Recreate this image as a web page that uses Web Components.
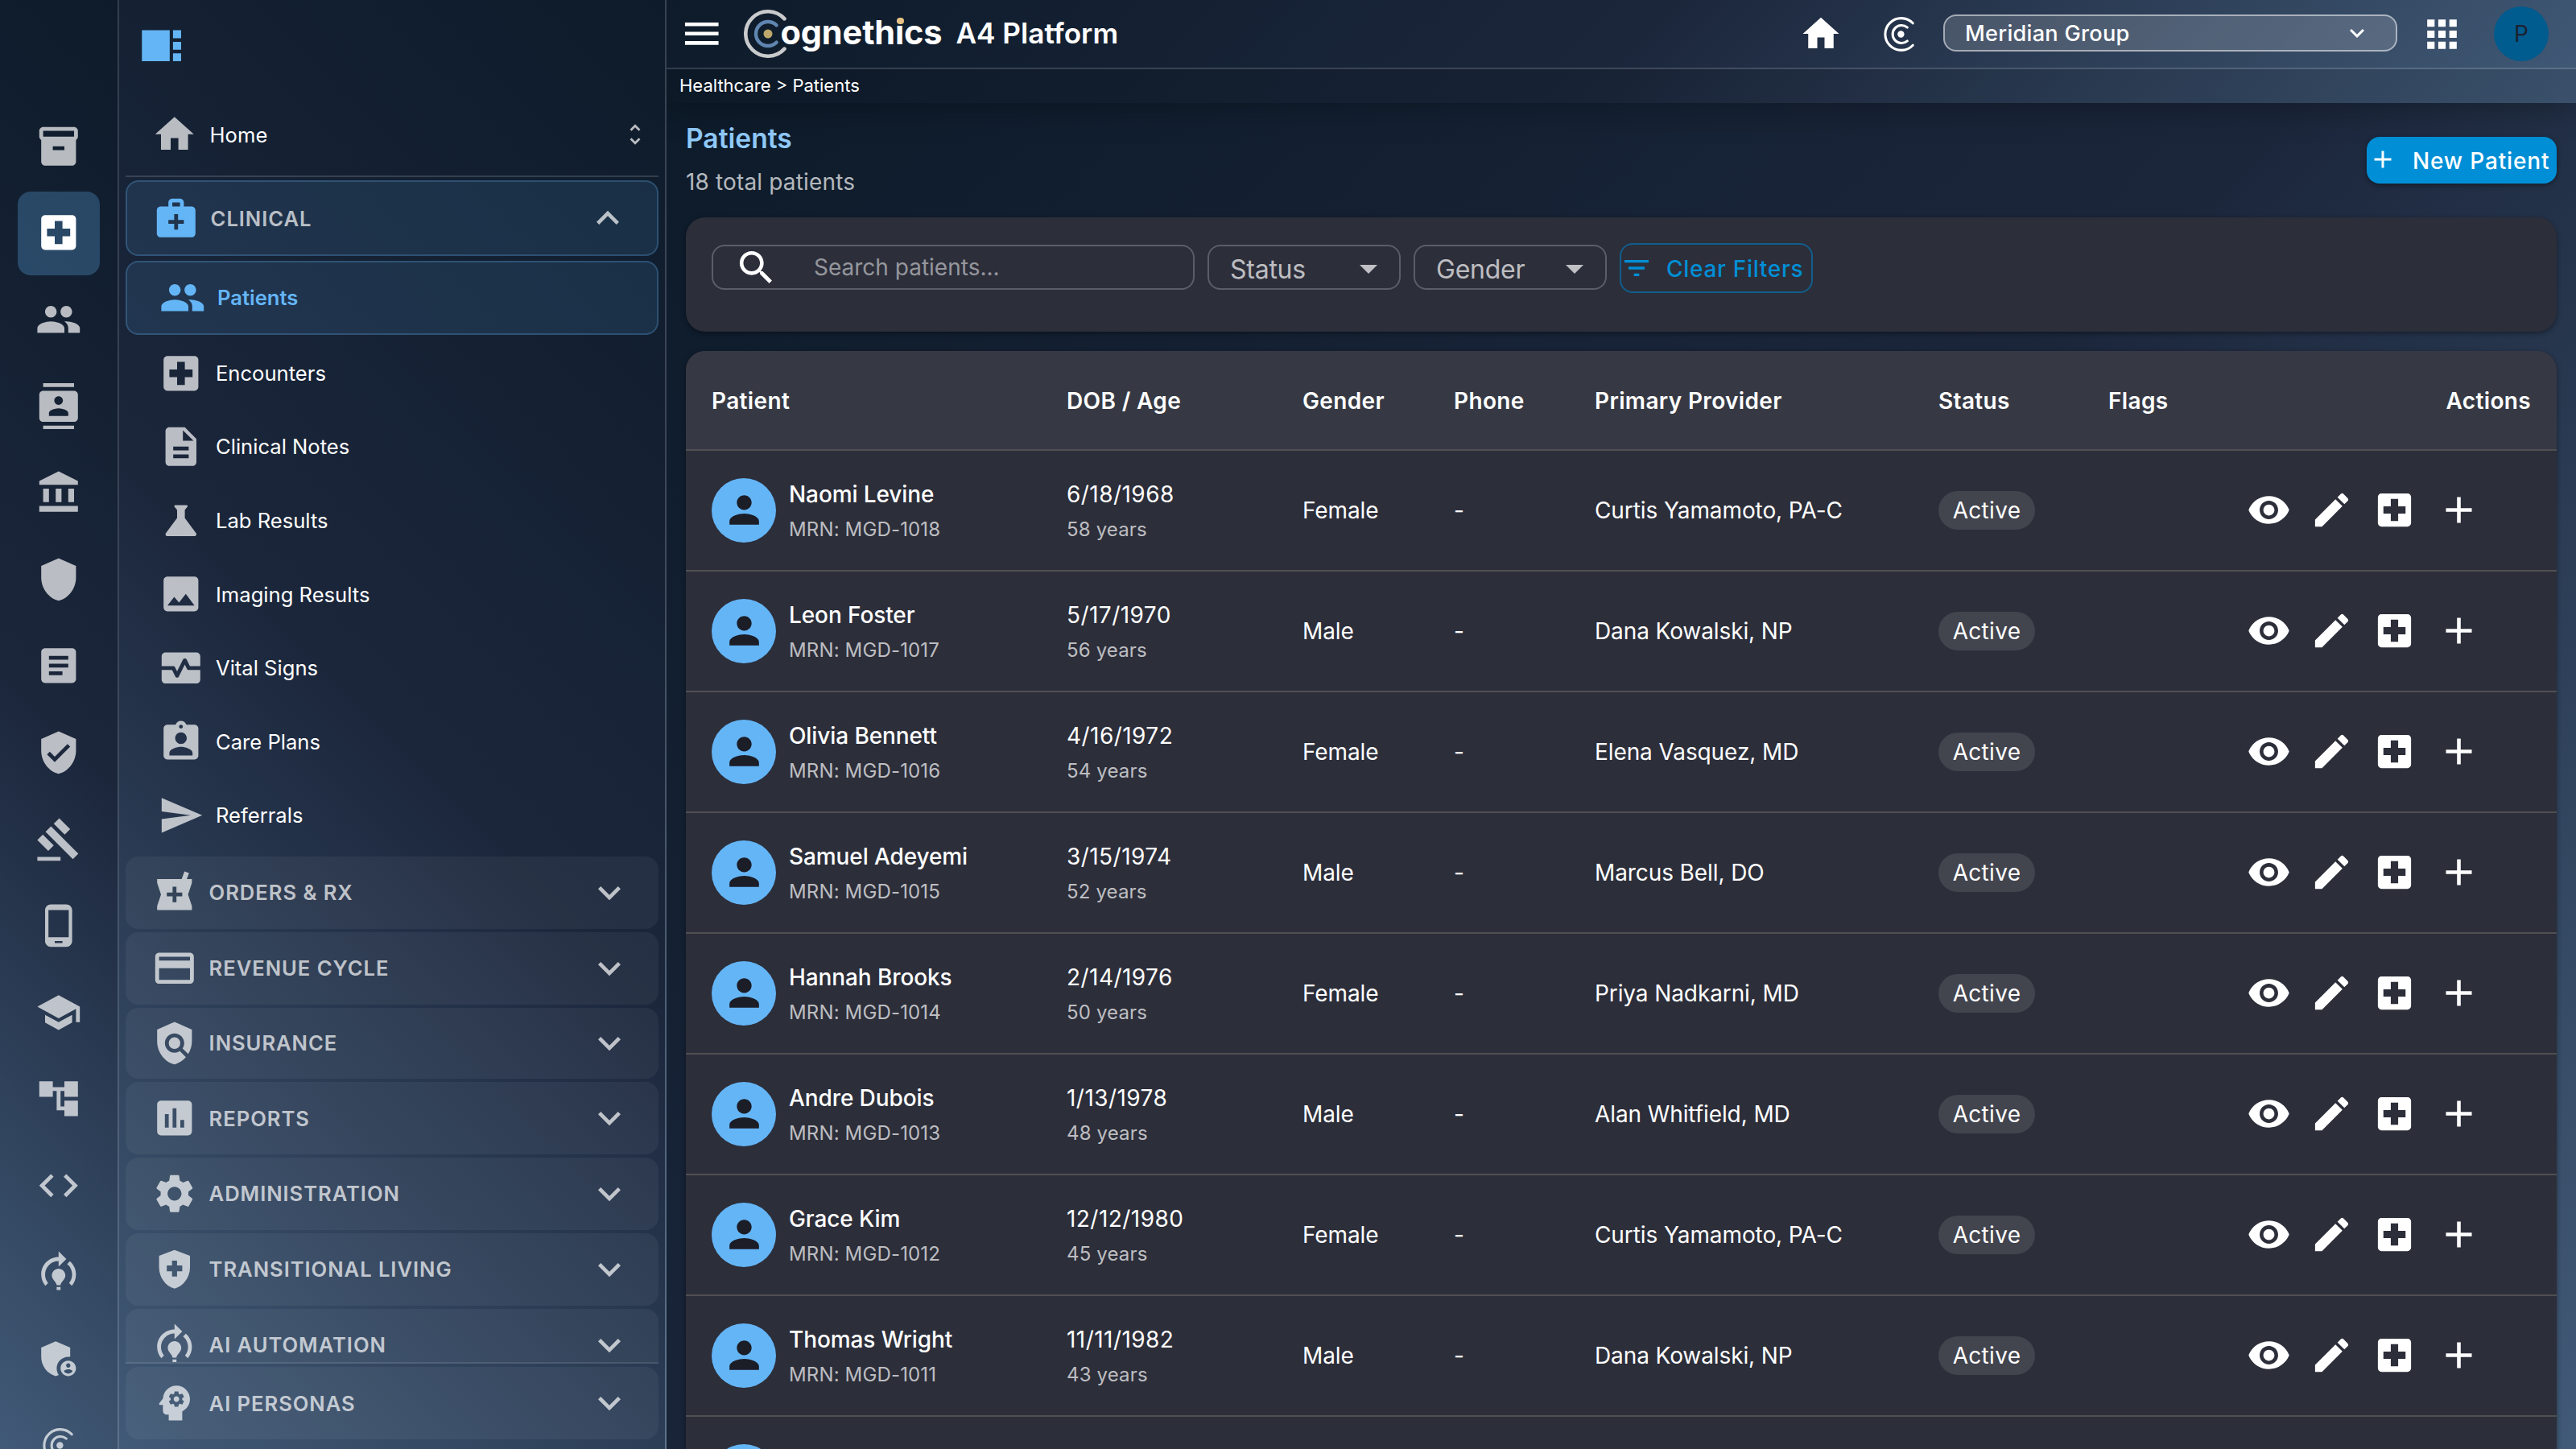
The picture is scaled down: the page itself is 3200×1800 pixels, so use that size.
<!DOCTYPE html>
<html lang="en">
<head>
<meta charset="utf-8">
<title>Patients - A4 Platform</title>
<style>
    html, body {
        margin: 0;
        height: 100%;
    }

    body {
        font-family: Inter, "Noto Sans", sans-serif;
        font-size: 28px;
        color: #fff;
        background: #0d1b2a;
        overflow: hidden;
        --accent: #64b5f6;
        --primary: #008fd6;
        --muted: rgba(255, 255, 255, 0.7);
        --line: rgba(255, 255, 255, 0.15);
        --surface: #2c2e3a;
    }
</style>
</head>
<body>
<a4-app></a4-app>

<script>
const CROSS = 'M19 3H5c-1.1 0-1.99.9-1.99 2L3 19c0 1.1.9 2 2 2h14c1.1 0 2-.9 2-2V5c0-1.1-.9-2-2-2zm-1 11h-4v4h-4v-4H6v-4h4V6h4v4h4v4z';

// 24x24 icon paths
const ICONS = {
    archive: 'M20 2H4c-1 0-2 .9-2 2v3.01c0 .72.43 1.34 1 1.69V20c0 1.1 1.1 2 2 2h14c.9 0 2-.9 2-2V8.7c.57-.35 1-.97 1-1.69V4c0-1.1-1-2-2-2zm-5 12H9v-2h6v2zm5-7H4V4h16v3z',
    hospital: CROSS,
    people: 'M16 11c1.66 0 2.99-1.34 2.99-3S17.66 5 16 5c-1.66 0-3 1.34-3 3s1.34 3 3 3zm-8 0c1.66 0 2.99-1.34 2.99-3S9.66 5 8 5C6.34 5 5 6.34 5 8s1.34 3 3 3zm0 2c-2.33 0-7 1.17-7 3.5V19h14v-2.5c0-2.33-4.67-3.5-7-3.5zm8 0c-.29 0-.62.02-.97.05 1.16.84 1.97 1.97 1.97 3.45V19h6v-2.5c0-2.33-4.67-3.5-7-3.5z',
    contacts: 'M20 0H4v2h16V0zM4 24h16v-2H4v2zM20 4H4c-1.1 0-2 .9-2 2v12c0 1.1.9 2 2 2h16c1.1 0 2-.9 2-2V6c0-1.1-.9-2-2-2zm-8 2.75c1.24 0 2.25 1.01 2.25 2.25s-1.01 2.25-2.25 2.25S9.75 10.24 9.75 9 10.76 6.75 12 6.75zM17 17H7v-1.5c0-1.67 3.33-2.5 5-2.5s5 .83 5 2.5V17z',
    bank: 'M4 10v7h3v-7H4zm6.5 0v7h3v-7h-3zM2 22h20v-3H2v3zm15-12v7h3v-7h-3zm-5-9L2 6v2h20V6L12 1z',
    shield: 'M12 1L3 5v6c0 5.55 3.84 10.74 9 12 5.16-1.26 9-6.45 9-12V5l-9-4z',
    article: 'M19 3H5c-1.1 0-2 .9-2 2v14c0 1.1.9 2 2 2h14c1.1 0 2-.9 2-2V5c0-1.1-.9-2-2-2zm-5 14H7v-2h7v2zm3-4H7v-2h10v2zm0-4H7V7h10v2z',
    verified: 'M12 1L3 5v6c0 5.55 3.84 10.74 9 12 5.16-1.26 9-6.45 9-12V5l-9-4zm-2 16l-4-4 1.41-1.41L10 14.17l6.59-6.59L18 9l-8 8z',
    gavel: 'M1 21h12v2H1zM5.245 8.07l2.83-2.827 14.14 14.142-2.828 2.828zM12.317 1l5.657 5.656-2.83 2.83-5.654-5.66zM3.825 9.485l5.657 5.657-2.828 2.828-5.657-5.657z',
    phone: 'M16 1H8C6.34 1 5 2.34 5 4v16c0 1.66 1.34 3 3 3h8c1.66 0 3-1.34 3-3V4c0-1.66-1.34-3-3-3zm-2 20h-4v-1h4v1zm3.25-3H6.75V4h10.5v14z',
    school: 'M5 13.18v4L12 21l7-3.82v-4L12 17l-7-3.82zM12 3L1 9l11 6 9-4.91V17h2V9L12 3z',
    tree: 'M22 11V3h-7v3H9V3H2v8h7V8h2v10h4v3h7v-8h-7v3h-2V8h2v3z',
    code: 'M9.4 16.6L4.8 12l4.6-4.6L8 6l-6 6 6 6 1.4-1.4zm5.2 0l4.6-4.6-4.6-4.6L16 6l6 6-6 6-1.4-1.4z',
    training: 'M15.5 13.5c0 2-2.5 3.5-2.5 5h-2c0-1.5-2.5-3-2.5-5 0-1.93 1.57-3.5 3.5-3.5s3.5 1.57 3.5 3.5zm-2.5 6h-2V21h2v-1.5zm6-6.5c0 1.68-.59 3.21-1.58 4.42l1.42 1.42C20.18 17.27 21 15.23 21 13c0-2.74-1.23-5.19-3.16-6.84l-1.42 1.42C17.99 8.86 19 10.82 19 13zm-3-8l-4-4v3c-4.97 0-9 4.03-9 9 0 2.23.82 4.27 2.16 5.84l1.42-1.42C5.59 16.21 5 14.68 5 13c0-3.86 3.14-7 7-7v3l4-4z',
    admin: 'M17 11c.34 0 .67.04 1 .09V6.27L10.5 3 3 6.27v4.91c0 4.54 3.2 8.79 7.5 9.82.55-.13 1.08-.32 1.6-.55-.69-.98-1.1-2.17-1.1-3.45 0-3.31 2.69-6 6-6zM17 13c-2.21 0-4 1.79-4 4s1.79 4 4 4 4-1.79 4-4-1.79-4-4-4zm0 1.38c.62 0 1.12.51 1.12 1.12s-.51 1.12-1.12 1.12-1.12-.51-1.12-1.12.5-1.12 1.12-1.12zm0 5.37c-.93 0-1.74-.46-2.24-1.17.05-.72 1.51-1.08 2.24-1.08s2.19.36 2.24 1.08c-.5.71-1.31 1.17-2.24 1.17z',
    home: 'M10 20v-6h4v6h5v-8h3L12 3 2 12h3v8z',
    unfold: 'M12 5.83L15.17 9l1.41-1.41L12 3 7.41 7.59 8.83 9 12 5.83zm0 12.34L8.83 15l-1.41 1.41L12 21l4.59-4.59L15.17 15 12 18.17z',
    medical: 'M20 6h-4V4c0-1.1-.9-2-2-2h-4c-1.1 0-2 .9-2 2v2H4c-1.1 0-2 .9-2 2v12c0 1.1.9 2 2 2h16c1.1 0 2-.9 2-2V8c0-1.1-.9-2-2-2zM10 4h4v2h-4V4zm6 11h-3v3h-2v-3H8v-2h3v-3h2v3h3v2z',
    description: 'M14 2H6c-1.1 0-1.99.9-1.99 2L4 20c0 1.1.89 2 1.99 2H18c1.1 0 2-.9 2-2V8l-6-6zm2 16H8v-2h8v2zm0-4H8v-2h8v2zm-3-5V3.5L18.5 9H13z',
    science: 'M19.8 18.4L14 10.67V6.5l1.35-1.69c.26-.33.03-.81-.39-.81H9.04c-.42 0-.65.48-.39.81L10 6.5v4.17L4.2 18.4c-.49.66-.02 1.6.8 1.6h14c.82 0 1.29-.94.8-1.6z',
    image: 'M21 19V5c0-1.1-.9-2-2-2H5c-1.1 0-2 .9-2 2v14c0 1.1.9 2 2 2h14c1.1 0 2-.9 2-2zM8.5 13.5l2.5 3.01L14.5 12l4.5 6H5l3.5-4.5z',
    heart: 'M15.11 12.45L14 10.24l-3.11 6.21c-.16.34-.51.55-.89.55s-.73-.21-.89-.55L7.38 13H2v5c0 1.1.9 2 2 2h16c1.1 0 2-.9 2-2v-5h-6c-.38 0-.73-.21-.89-.55zM20 4H4c-1.1 0-2 .9-2 2v5h6c.38 0 .73.21.89.55L10 13.76l3.11-6.21c.34-.68 1.45-.68 1.79 0L16.62 11H22V6c0-1.1-.9-2-2-2z',
    assignment: 'M19 3h-4.18C14.4 1.84 13.3 1 12 1c-1.3 0-2.4.84-2.82 2H5c-1.1 0-2 .9-2 2v14c0 1.1.9 2 2 2h14c1.1 0 2-.9 2-2V5c0-1.1-.9-2-2-2zm-7 0c.55 0 1 .45 1 1s-.45 1-1 1-1-.45-1-1 .45-1 1-1zm0 4c1.66 0 3 1.34 3 3s-1.34 3-3 3-3-1.34-3-3 1.34-3 3-3zm6 12H6v-1.4c0-2 4-3.1 6-3.1s6 1.1 6 3.1V19z',
    send: 'M2.01 21L23 12 2.01 3 2 10l15 2-15 2z',
    pharmacy: 'M21 5h-2.64l1.14-3.14L17.15 1l-1.46 4H3v2l2 6-2 6v2h18v-2l-2-6 2-6V5zm-5 9h-3v3h-2v-3H8v-2h3V9h2v3h3v2z',
    card: 'M20 4H4c-1.11 0-1.99.89-1.99 2L2 18c0 1.11.89 2 2 2h16c1.11 0 2-.89 2-2V6c0-1.11-.89-2-2-2zm0 14H4v-6h16v6zm0-10H4V6h16v2z',
    policy: 'M21 5l-9-4-9 4v6c0 5.55 3.84 10.74 9 12 2.3-.56 4.33-1.9 5.88-3.71l-3.12-3.12c-1.94 1.29-4.58 1.07-6.29-.64-1.95-1.95-1.95-5.12 0-7.07 1.95-1.95 5.12-1.95 7.07 0 1.71 1.71 1.92 4.35.64 6.29l2.9 2.9C20.29 15.69 21 13.38 21 11V5zM9 12a3 3 0 1 0 6 0a3 3 0 1 0-6 0z',
    chart: 'M19 3H5c-1.1 0-2 .9-2 2v14c0 1.1.9 2 2 2h14c1.1 0 2-.9 2-2V5c0-1.1-.9-2-2-2zM9 17H7v-7h2v7zm4 0h-2V7h2v10zm4 0h-2v-4h2v4z',
    settings: 'M19.14 12.94c.04-.3.06-.61.06-.94 0-.32-.02-.64-.07-.94l2.03-1.58c.18-.14.23-.41.12-.61l-1.92-3.32c-.12-.22-.37-.29-.59-.22l-2.39.96c-.5-.38-1.03-.7-1.62-.94l-.36-2.54c-.04-.24-.24-.41-.48-.41h-3.84c-.24 0-.43.17-.47.41l-.36 2.54c-.59.24-1.13.57-1.62.94l-2.39-.96c-.22-.08-.47 0-.59.22L2.74 8.87c-.12.21-.08.47.12.61l2.03 1.58c-.05.3-.09.63-.09.94s.02.64.07.94l-2.03 1.58c-.18.14-.23.41-.12.61l1.92 3.32c.12.22.37.29.59.22l2.39-.96c.5.38 1.03.7 1.62.94l.36 2.54c.05.24.24.41.48.41h3.84c.24 0 .44-.17.47-.41l.36-2.54c.59-.24 1.13-.56 1.62-.94l2.39.96c.22.08.47 0 .59-.22l1.92-3.32c.12-.22.07-.47-.12-.61l-2.01-1.58zM12 15.6c-1.98 0-3.6-1.62-3.6-3.6s1.62-3.6 3.6-3.6 3.6 1.62 3.6 3.6-1.62 3.6-3.6 3.6z',
    safety: 'M12 2L4 5v6.09c0 5.05 3.41 9.76 8 10.91 4.59-1.15 8-5.86 8-10.91V5l-8-3zM16 13h-2.7v2.7h-2.6V13H8v-3h2.7V7.5h2.6V10H16v3z',
    psychology: 'M13 8.57c-.79 0-1.43.64-1.43 1.43s.64 1.43 1.43 1.43 1.43-.64 1.43-1.43-.64-1.43-1.43-1.43zM13 3C9.25 3 6.2 5.94 6.02 9.64L4.1 12.2c-.25.33-.01.8.4.8H6v3c0 1.1.9 2 2 2h1v3h7v-4.68c2.36-1.12 4-3.53 4-6.32 0-3.87-3.13-7-7-7zm3 7c0 .13-.01.26-.02.39l.83.66c.08.06.1.16.05.25l-.8 1.39c-.05.09-.16.12-.24.09l-.99-.4c-.21.16-.43.29-.67.39L14 13.83c-.01.1-.1.17-.2.17h-1.6c-.1 0-.18-.07-.2-.17l-.15-1.06c-.25-.1-.47-.23-.68-.39l-.99.4c-.09.03-.2 0-.25-.09l-.8-1.39c-.05-.08-.03-.19.05-.25l.84-.66c-.01-.13-.02-.26-.02-.39s.02-.27.04-.39l-.85-.66c-.08-.06-.1-.16-.05-.26l.8-1.38c.05-.09.15-.12.24-.09l1 .4c.2-.15.43-.29.67-.39L12 6.17c.02-.1.1-.17.2-.17h1.6c.1 0 .18.07.2.17l.15 1.06c.24.1.46.23.67.39l1-.4c.09-.03.2 0 .24.09l.8 1.38c.05.09.03.2-.05.26l-.85.66c.03.12.04.25.04.39z',
    down: 'M7.41 8.59L12 13.17l4.59-4.58L18 10l-6 6-6-6 1.41-1.41z',
    up: 'M12 8l-6 6 1.41 1.41L12 10.83l4.59 4.58L18 14z',
    menu: 'M3 18h18v-2H3v2zm0-5h18v-2H3v2zm0-7v2h18V6H3z',
    apps: 'M4 8h4V4H4v4zm6 12h4v-4h-4v4zm-6 0h4v-4H4v4zm0-6h4v-4H4v4zm6 0h4v-4h-4v4zm6-10v4h4V4h-4zm-6 4h4V4h-4v4zm6 6h4v-4h-4v4zm0 6h4v-4h-4v4z',
    add: 'M19 13h-6v6h-2v-6H5v-2h6V5h2v6h6v2z',
    search: 'M15.5 14h-.79l-.28-.27C15.41 12.59 16 11.11 16 9.5 16 5.91 13.09 3 9.5 3S3 5.91 3 9.5 5.91 16 9.5 16c1.61 0 3.09-.59 4.23-1.57l.27.28v.79l5 4.99L20.49 19l-4.99-5zm-6 0C7.01 14 5 11.99 5 9.5S7.01 5 9.5 5 14 7.01 14 9.5 11.99 14 9.5 14z',
    filter: 'M10 18h4v-2h-4v2zM3 6v2h18V6H3zm3 7h12v-2H6v2z',
    person: 'M12 12c2.21 0 4-1.79 4-4s-1.79-4-4-4-4 1.79-4 4 1.79 4 4 4zm0 2c-2.67 0-8 1.34-8 4v2h16v-2c0-2.66-5.33-4-8-4z',
    eye: 'M12 4.5C7 4.5 2.73 7.61 1 12c1.73 4.39 6 7.5 11 7.5s9.27-3.11 11-7.5c-1.73-4.39-6-7.5-11-7.5zM12 17c-2.76 0-5-2.24-5-5s2.24-5 5-5 5 2.24 5 5-2.24 5-5 5zm0-8c-1.66 0-3 1.34-3 3s1.34 3 3 3 3-1.34 3-3-1.34-3-3-3z',
    edit: 'M3 17.25V21h3.75L17.81 9.94l-3.75-3.75L3 17.25zM20.71 7.04c.39-.39.39-1.02 0-1.41l-2.34-2.34c-.39-.39-1.02-.39-1.41 0l-1.83 1.83 3.75 3.75 1.83-1.83z',
    panel: 'M2.2 4h14.4v16H2.2zM18.3 4h4.2v4.1h-4.2zM18.3 10h4.2v4.1h-4.2zM18.3 15.9h4.2V20h-4.2z'
};

const CMARK = `
    <g fill="none" stroke="currentColor" stroke-linecap="round" stroke-width="1.4">
        <path d="M19.1 5.8A9 9 0 1 0 19.1 18.2"/>
        <path d="M16 8.2A5 5 0 1 0 16 15.8"/>
    </g>
    <circle cx="12.4" cy="12" r="1.9" fill="currentColor"/>`;

class A4Icon extends HTMLElement {
    constructor() {
        super();
        this.attachShadow({ mode: 'open' });
    }

    static get observedAttributes() {
        return ['name', 'size'];
    }

    attributeChangedCallback() {
        this.render();
    }

    render() {
        const name = this.getAttribute('name');
        const size = this.getAttribute('size') || 57.6;
        const shape = name === 'cmark' ? CMARK : `<path fill="currentColor" fill-rule="evenodd" d="${ICONS[name]}"/>`;
        this.shadowRoot.innerHTML = `
            <style>
                :host { display: block; flex: none; width: ${size}px; height: ${size}px; }
                svg { display: block; width: 100%; height: 100%; }
            </style>
            <svg viewBox="0 0 24 24">${shape}</svg>
        `;
    }
}
customElements.define('a4-icon', A4Icon);

// Narrow column of module icons
class IconRail extends HTMLElement {
    constructor() {
        super();
        this.attachShadow({ mode: 'open' });
        const names = ['archive', 'hospital', 'people', 'contacts', 'bank', 'shield', 'article', 'verified',
            'gavel', 'phone', 'school', 'tree', 'code', 'training', 'admin', 'cmark'];
        this.shadowRoot.innerHTML = `
            <style>
                :host {
                    display: flex;
                    flex-direction: column;
                    align-items: center;
                    gap: 4px;
                    box-sizing: border-box;
                    padding-top: 130.4px;
                    overflow: hidden;
                    color: var(--muted);
                    border-right: 2px solid var(--line);
                    background: linear-gradient(225deg, #0d1b2a, #1b263b 50%, #415a77);
                }
                .item {
                    flex: none;
                    display: flex;
                    align-items: center;
                    justify-content: center;
                    width: 102px;
                    height: 103.6px;
                    border-radius: 16px;
                }
                .item a4-icon { margin-top: -1px; }
                .selected {
                    color: #fff;
                    background: rgba(100, 181, 246, 0.28);
                }
            </style>
            ${names.map(n => `<div class="item ${n === 'hospital' ? 'selected' : ''}"><a4-icon name="${n}" size="${n === 'cmark' ? 53 : 57.6}"></a4-icon></div>`).join('')}
        `;
    }
}
customElements.define('icon-rail', IconRail);

class NavGroup extends HTMLElement {
    constructor() {
        super();
        this.attachShadow({ mode: 'open' });
    }

    connectedCallback() {
        const open = this.hasAttribute('open');
        this.shadowRoot.innerHTML = `
            <style>
                :host {
                    display: block;
                    flex: none;
                }
                .head {
                    display: flex;
                    align-items: center;
                    gap: 14px;
                    box-sizing: border-box;
                    height: var(--group-height, 89.9px);
                    padding: 0 33px 0 32px;
                    border-radius: 16px;
                    color: var(--muted);
                    background: rgba(255, 255, 255, 0.05);
                }
                :host([open]) .head {
                    height: 94px;
                    border: 2px solid rgba(100, 181, 246, 0.25);
                    background: rgba(100, 181, 246, 0.12);
                }
                :host([open]) .icon { color: var(--accent); }
                .label {
                    flex: 1;
                    font-size: 25.6px;
                    font-weight: 600;
                    letter-spacing: 0.95px;
                    text-transform: uppercase;
                }
                .body {
                    display: flex;
                    flex-direction: column;
                    gap: 4px;
                }
                :host([open]) .body { padding: 6px 0 7px; }
            </style>
            <div class="head">
                <a4-icon class="icon" name="${this.getAttribute('icon')}"></a4-icon>
                <span class="label">${this.getAttribute('label')}</span>
                <a4-icon name="${open ? 'up' : 'down'}" size="56"></a4-icon>
            </div>
            <div class="body"><slot></slot></div>
        `;
    }
}
customElements.define('nav-group', NavGroup);

class NavItem extends HTMLElement {
    constructor() {
        super();
        this.attachShadow({ mode: 'open' });
    }

    connectedCallback() {
        this.shadowRoot.innerHTML = `
            <style>
                :host {
                    display: flex;
                    align-items: center;
                    gap: 14.4px;
                    box-sizing: border-box;
                    height: 87.6px;
                    padding: 0 40px;
                    border-radius: 16px;
                    font-size: 25.6px;
                }
                a4-icon { color: var(--muted); }
                :host([active]) {
                    height: 91.6px;
                    border: 2px solid rgba(100, 181, 246, 0.25);
                    background: rgba(100, 181, 246, 0.12);
                    color: var(--accent);
                    font-weight: 600;
                }
                :host([active]) a4-icon { color: var(--accent); }
            </style>
            <a4-icon name="${this.getAttribute('icon')}"></a4-icon>
            <slot></slot>
        `;
    }
}
customElements.define('nav-item', NavItem);

class SideNav extends HTMLElement {
    constructor() {
        super();
        this.attachShadow({ mode: 'open' });
        this.shadowRoot.innerHTML = `
            <style>
                :host {
                    display: flex;
                    flex-direction: column;
                    box-sizing: border-box;
                    padding: 0 8px;
                    overflow: hidden;
                    border-right: 2px solid var(--line);
                    background: linear-gradient(225deg, #0d1b2a, #1b263b 50%, #415a77);
                }
                .tools {
                    flex: none;
                    box-sizing: border-box;
                    height: 116px;
                    padding: 28px 0 0 15px;
                    color: var(--accent);
                }
                .home {
                    flex: none;
                    display: flex;
                    align-items: center;
                    gap: 15px;
                    box-sizing: border-box;
                    height: 104px;
                    padding: 0 12px 0 32px;
                    border-bottom: 2px solid var(--line);
                    font-size: 25.6px;
                }
                .home span { flex: 1; }
                .home a4-icon { color: var(--muted); }
                .scroll {
                    flex: 1;
                    display: flex;
                    flex-direction: column;
                    gap: 4px;
                    min-height: 0;
                    padding-top: 4px;
                    overflow: hidden;
                }
                .scroll nav-group[open] { margin-bottom: -4px; }
                .foot {
                    flex: none;
                    padding: 4px 0 12px;
                    border-top: 2px solid var(--line);
                }
            </style>
            <div class="tools"><a4-icon name="panel" size="57.6"></a4-icon></div>
            <div class="home">
                <a4-icon name="home"></a4-icon>
                <span>Home</span>
                <a4-icon name="unfold" size="34"></a4-icon>
            </div>
            <div class="scroll">
                <nav-group icon="medical" label="Clinical" open>
                    <nav-item icon="people" active>Patients</nav-item>
                    <nav-item icon="hospital">Encounters</nav-item>
                    <nav-item icon="description">Clinical Notes</nav-item>
                    <nav-item icon="science">Lab Results</nav-item>
                    <nav-item icon="image">Imaging Results</nav-item>
                    <nav-item icon="heart">Vital Signs</nav-item>
                    <nav-item icon="assignment">Care Plans</nav-item>
                    <nav-item icon="send">Referrals</nav-item>
                </nav-group>
                <nav-group icon="pharmacy" label="Orders &amp;amp; Rx"></nav-group>
                <nav-group icon="card" label="Revenue Cycle"></nav-group>
                <nav-group icon="policy" label="Insurance" style="--group-height: 88.6px"></nav-group>
                <nav-group icon="chart" label="Reports"></nav-group>
                <nav-group icon="settings" label="Administration"></nav-group>
                <nav-group icon="safety" label="Transitional Living"></nav-group>
                <nav-group icon="training" label="AI Automation"></nav-group>
            </div>
            <div class="foot"><nav-group icon="psychology" label="AI Personas"></nav-group></div>
        `;
    }
}
customElements.define('side-nav', SideNav);

class A4Logo extends HTMLElement {
    constructor() {
        super();
        this.attachShadow({ mode: 'open' });
        this.shadowRoot.innerHTML = `
            <style>
                :host { display: flex; align-items: center; height: 84px; }
                svg { display: block; width: 60px; height: 60px; }
                .word {
                    position: relative;
                    margin: -4px 0 0 -14px;
                    font-size: 41.5px;
                    font-weight: 700;
                    letter-spacing: -0.15px;
                }
                /* gold tittle over the i */
                .word i {
                    position: absolute;
                    left: 144.5px;
                    top: 6.5px;
                    width: 8.5px;
                    height: 8.5px;
                    border-radius: 50%;
                    background: #e9c383;
                }
                .product {
                    margin: -3px 0 0 17px;
                    font-size: 35.2px;
                    font-weight: 600;
                }
            </style>
            <svg viewBox="0 0 60 60" fill="none" stroke-linecap="round">
                <path d="M50.5 11.4A27.7 27.7 0 1 0 50.5 48.6" stroke="#c9cacc" stroke-width="4.6"/>
                <path d="M40.6 19.4A15 15 0 1 0 40.6 40.6" stroke="#5f85b0" stroke-width="4.4"/>
                <circle cx="30" cy="30" r="5.5" fill="#bfa66b"/>
            </svg>
            <span class="word">ognethics<i></i></span>
            <span class="product">A4 Platform</span>
        `;
    }
}
customElements.define('a4-logo', A4Logo);

class TopBar extends HTMLElement {
    constructor() {
        super();
        this.attachShadow({ mode: 'open' });
        this.shadowRoot.innerHTML = `
            <style>
                :host {
                    display: block;
                    position: relative;
                    height: 128px;
                    background: linear-gradient(135deg, #0d1b2a, #1b263b 50%, #415a77);
                    box-shadow: 0 4px 40px rgba(0, 0, 0, 0.3);
                }
                .bar {
                    display: flex;
                    align-items: center;
                    height: 84px;
                    padding: 0 34px 0 15.5px;
                    border-bottom: 2px solid var(--line);
                }
                a4-logo { margin-left: 24.5px; }
                .home { margin-left: auto; }
                .mark { margin-left: 45px; }
                .org {
                    display: flex;
                    align-items: center;
                    justify-content: space-between;
                    box-sizing: border-box;
                    width: 564px;
                    height: 46px;
                    margin: -2px 28px 0 27px;
                    padding: 0 30px 0 25px;
                    border: 2px solid rgba(255, 255, 255, 0.5);
                    border-radius: 16px;
                    background: rgba(255, 255, 255, 0.16);
                    font-size: 27.2px;
                    font-weight: 500;
                    letter-spacing: 0.25px;
                }
                .avatar {
                    display: flex;
                    align-items: center;
                    justify-content: center;
                    width: 68px;
                    height: 68px;
                    margin-left: 37px;
                    border-radius: 50%;
                    background: #005b8e;
                    color: #1a2230;
                    font-size: 28px;
                }
                .crumbs {
                    display: flex;
                    align-items: center;
                    box-sizing: border-box;
                    height: 42px;
                    padding: 0 0 2px 16px;
                    background: rgba(0, 0, 0, 0.1);
                    font-size: 22px;
                }
            </style>
            <div class="bar">
                <a4-icon name="menu" size="55.5"></a4-icon>
                <a4-logo></a4-logo>
                <a4-icon class="home" name="home" size="54"></a4-icon>
                <a4-icon class="mark" name="cmark" size="53"></a4-icon>
                <div class="org"><span>Meridian Group</span><a4-icon name="down" size="36"></a4-icon></div>
                <a4-icon name="apps" size="55"></a4-icon>
                <div class="avatar">P</div>
            </div>
            <div class="crumbs">Healthcare &gt; Patients</div>
        `;
    }
}
customElements.define('top-bar', TopBar);

class FilterBar extends HTMLElement {
    constructor() {
        super();
        this.attachShadow({ mode: 'open' });
        this.shadowRoot.innerHTML = `
            <style>
                :host {
                    display: flex;
                    align-items: flex-start;
                    gap: 16px;
                    box-sizing: border-box;
                    height: 142px;
                    padding: 32px;
                    border-radius: 24px;
                    background: var(--surface);
                    box-shadow: 0 2px 6px rgba(0, 0, 0, 0.4);
                }
                div {
                    display: flex;
                    align-items: center;
                    box-sizing: border-box;
                    border: 2px solid #5b5d68;
                    border-radius: 16px;
                }
                .search {
                    width: 600px;
                    height: 56px;
                    margin-top: 2px;
                    padding-left: 26px;
                    gap: 44px;
                }
                .search span { color: rgba(255, 255, 255, 0.5); font-size: 28px; }
                .select {
                    width: 240px;
                    height: 56px;
                    margin-top: 2px;
                    padding: 4px 27px 0 26px;
                    justify-content: space-between;
                    color: var(--muted);
                    font-size: 32px;
                    letter-spacing: -0.25px;
                }
                .select i {
                    border: 11px solid transparent;
                    border-top-color: currentColor;
                    border-bottom: 0;
                }
                .clear {
                    width: 240px;
                    height: 62px;
                    padding-top: 2px;
                    gap: 17px;
                    border-color: #115e8b;
                    color: var(--primary);
                    font-weight: 500;
                    letter-spacing: 0.7px;
                    white-space: nowrap;
                }
                .clear a4-icon { margin: -3px 0 0 -1px; }
            </style>
            <div class="search"><a4-icon name="search" size="55"></a4-icon><span>Search patients...</span></div>
            <div class="select">Status<i></i></div>
            <div class="select">Gender<i></i></div>
            <div class="clear"><a4-icon name="filter" size="40"></a4-icon>Clear Filters</div>
        `;
    }
}
customElements.define('filter-bar', FilterBar);

const COLUMNS = '441px 293px 188px 175px 427px 211px 172px 1fr';

class PatientRow extends HTMLElement {
    constructor() {
        super();
        this.attachShadow({ mode: 'open' });
    }

    connectedCallback() {
        const get = name => this.getAttribute(name);
        this.shadowRoot.innerHTML = `
            <style>
                :host {
                    display: grid;
                    grid-template-columns: ${COLUMNS};
                    align-items: center;
                    box-sizing: border-box;
                    height: 150px;
                    padding: 0 32px;
                    border-bottom: 2px solid #504f50;
                    font-size: 28px;
                    letter-spacing: -0.1px;
                }
                .patient { display: flex; align-items: center; gap: 16px; }
                .avatar {
                    display: flex;
                    align-items: center;
                    justify-content: center;
                    width: 80px;
                    height: 80px;
                    border-radius: 50%;
                    background: var(--accent);
                    color: #1b1d27;
                }
                .avatar a4-icon { margin-top: -2px; }
                .text { padding-top: 4px; }
                .name { font-weight: 500; }
                .dob { letter-spacing: 0.45px; }
                .name, .dob { line-height: 43px; }
                .sub {
                    color: var(--muted);
                    font-size: 24px;
                    line-height: 43px;
                    letter-spacing: 0.15px;
                }
                .chip {
                    display: inline-flex;
                    align-items: center;
                    justify-content: center;
                    width: 120px;
                    height: 48px;
                    border-radius: 24px;
                    background: #42444e;
                    letter-spacing: 0.3px;
                }
                .actions {
                    display: flex;
                    justify-content: flex-end;
                    gap: 23px;
                    margin-top: -1px;
                    padding-right: 68px;
                }
                .actions a4-icon:last-child { margin-left: 2px; }
            </style>
            <div class="patient">
                <div class="avatar"><a4-icon name="person" size="55"></a4-icon></div>
                <div class="text">
                    <div class="name">${get('name')}</div>
                    <div class="sub">MRN: ${get('mrn')}</div>
                </div>
            </div>
            <div class="text">
                <div class="dob">${get('dob')}</div>
                <div class="sub">${get('age')} years</div>
            </div>
            <div>${get('gender')}</div>
            <div>-</div>
            <div>${get('provider')}</div>
            <div><span class="chip">Active</span></div>
            <div></div>
            <div class="actions">
                <a4-icon name="eye" size="55"></a4-icon>
                <a4-icon name="edit" size="55"></a4-icon>
                <a4-icon name="hospital" size="55"></a4-icon>
                <a4-icon name="add" size="55"></a4-icon>
            </div>
        `;
    }
}
customElements.define('patient-row', PatientRow);

class PatientTable extends HTMLElement {
    constructor() {
        super();
        this.attachShadow({ mode: 'open' });
        const patients = [
            ['Naomi Levine', 'MGD-1018', '6/18/1968', 58, 'Female', 'Curtis Yamamoto, PA-C'],
            ['Leon Foster', 'MGD-1017', '5/17/1970', 56, 'Male', 'Dana Kowalski, NP'],
            ['Olivia Bennett', 'MGD-1016', '4/16/1972', 54, 'Female', 'Elena Vasquez, MD'],
            ['Samuel Adeyemi', 'MGD-1015', '3/15/1974', 52, 'Male', 'Marcus Bell, DO'],
            ['Hannah Brooks', 'MGD-1014', '2/14/1976', 50, 'Female', 'Priya Nadkarni, MD'],
            ['Andre Dubois', 'MGD-1013', '1/13/1978', 48, 'Male', 'Alan Whitfield, MD'],
            ['Grace Kim', 'MGD-1012', '12/12/1980', 45, 'Female', 'Curtis Yamamoto, PA-C'],
            ['Thomas Wright', 'MGD-1011', '11/11/1982', 43, 'Male', 'Dana Kowalski, NP']
        ];
        this.shadowRoot.innerHTML = `
            <style>
                :host {
                    display: block;
                    overflow: hidden;
                    border-radius: 24px 24px 0 0;
                    background: var(--surface);
                    box-shadow: 0 2px 6px rgba(0, 0, 0, 0.4);
                }
                .head {
                    display: grid;
                    grid-template-columns: ${COLUMNS};
                    align-items: center;
                    box-sizing: border-box;
                    height: 124px;
                    padding: 2px 32px 0;
                    border-bottom: 2px solid #504f50;
                    background: #363944;
                    font-weight: 600;
                    letter-spacing: 0.35px;
                }
                .head span:last-child { text-align: right; }
                /* top of the row that runs below the fold */
                .next {
                    height: 40px;
                    padding: 34px 32px 0;
                }
                .next i {
                    display: block;
                    width: 80px;
                    height: 80px;
                    border-radius: 50%;
                    background: var(--accent);
                }
            </style>
            <div class="head">
                <span>Patient</span><span>DOB / Age</span><span>Gender</span><span>Phone</span>
                <span>Primary Provider</span><span>Status</span><span>Flags</span><span>Actions</span>
            </div>
            ${patients.map(([name, mrn, dob, age, gender, provider]) => `
                <patient-row name="${name}" mrn="${mrn}" dob="${dob}" age="${age}" gender="${gender}" provider="${provider}"></patient-row>
            `).join('')}
            <div class="next"><i></i></div>
        `;
    }
}
customElements.define('patient-table', PatientTable);

class PatientsPage extends HTMLElement {
    constructor() {
        super();
        this.attachShadow({ mode: 'open' });
        this.shadowRoot.innerHTML = `
            <style>
                :host {
                    display: flex;
                    flex-direction: column;
                    box-sizing: border-box;
                    min-height: 0;
                    padding: 0 24px;
                    overflow: hidden;
                    background: linear-gradient(135deg, #0d1b2a, #1b263b 50%, #415a77);
                }
                header {
                    flex: none;
                    display: flex;
                    justify-content: space-between;
                    box-sizing: border-box;
                    height: 142px;
                    padding-top: 20px;
                }
                h1 {
                    margin: 0;
                    color: #90caf9;
                    font-size: 33.6px;
                    font-weight: 600;
                    line-height: 48px;
                }
                p {
                    margin: 10px 0 0;
                    color: var(--muted);
                    font-size: 28px;
                    line-height: 40px;
                    letter-spacing: 0.15px;
                }
                button {
                    display: flex;
                    align-items: center;
                    gap: 19px;
                    width: 236px;
                    height: 58px;
                    margin: 22px 0 0;
                    padding: 1px 0 0 2px;
                    border: 0;
                    border-radius: 16px;
                    background: var(--primary);
                    box-shadow: 0 2px 6px rgba(0, 0, 0, 0.4);
                    color: #fff;
                    font: 500 28px Inter, sans-serif;
                    letter-spacing: 0.85px;
                    white-space: nowrap;
                }
                button a4-icon { margin-top: -3px; }
                filter-bar { flex: none; margin-bottom: 24px; }
                patient-table { flex: 1; }
            </style>
            <header>
                <div>
                    <h1>Patients</h1>
                    <p>18 total patients</p>
                </div>
                <button><a4-icon name="add" size="36"></a4-icon>New Patient</button>
            </header>
            <filter-bar></filter-bar>
            <patient-table></patient-table>
        `;
    }
}
customElements.define('patients-page', PatientsPage);

class A4App extends HTMLElement {
    constructor() {
        super();
        this.attachShadow({ mode: 'open' });
        this.shadowRoot.innerHTML = `
            <style>
                :host {
                    display: grid;
                    grid-template-columns: 148px 680px 1fr;
                    grid-template-rows: 100vh;
                    height: 100vh;
                }
                main {
                    display: grid;
                    grid-template-rows: 128px 1fr;
                    min-width: 0;
                    min-height: 0;
                    overflow: hidden;
                }
                top-bar { z-index: 1; }
            </style>
            <icon-rail></icon-rail>
            <side-nav></side-nav>
            <main>
                <top-bar></top-bar>
                <patients-page></patients-page>
            </main>
        `;
    }
}
customElements.define('a4-app', A4App);
</script>
</body>
</html>
